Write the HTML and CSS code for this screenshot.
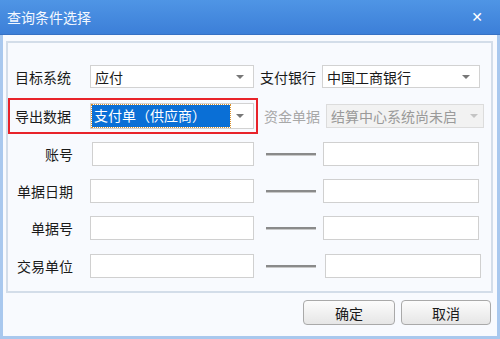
FILE: index.html
```html
<!DOCTYPE html>
<html lang="zh-CN">
<head>
  <meta charset="UTF-8" />
  <title>查询条件选择</title>
  <link rel="stylesheet" href="styles.css">
</head>
<body>
  <div class="window">
    <div class="titlebar">
      <span class="title">查询条件选择</span>
      <span class="close">✕</span>
    </div>
    <div class="body">
      <div class="group">
        <div class="row row-first">
          <label class="lbl">目标系统</label>
          <div class="select">
            <span class="value">应付</span>
            <span class="arrow"></span>
          </div>
          <label class="lbl2">支付银行</label>
          <div class="select select-right">
            <span class="value">中国工商银行</span>
            <span class="arrow"></span>
          </div>
        </div>

        <div class="row row-export">
          <div class="marked">
            <label class="lbl">导出数据</label>
            <div class="select select-tall">
              <span class="value focused">支付单（供应商）</span>
              <span class="arrow"></span>
            </div>
          </div>
          <label class="lbl2 disabled-text">资金单据</label>
          <div class="select select-right select-disabled">
            <span class="value">结算中心系统尚未启</span>
            <span class="arrow"></span>
          </div>
        </div>

        <div class="row row-range r3">
          <label class="lbl right">账号</label>
          <input class="field field-a" type="text" />
          <span class="dash"></span>
          <input class="field field-b" type="text" />
        </div>
        <div class="row row-range r4">
          <label class="lbl right">单据日期</label>
          <input class="field" type="text" />
          <span class="dash"></span>
          <input class="field field-b" type="text" />
        </div>
        <div class="row row-range r5">
          <label class="lbl right">单据号</label>
          <input class="field" type="text" />
          <span class="dash"></span>
          <input class="field field-b" type="text" />
        </div>
        <div class="row row-range r6">
          <label class="lbl right">交易单位</label>
          <input class="field" type="text" />
          <span class="dash"></span>
          <input class="field field-c" type="text" />
        </div>
      </div>

      <div class="buttons">
        <button class="btn btn-ok">确定</button>
        <button class="btn btn-cancel">取消</button>
      </div>
    </div>
  </div>
</body>
</html>
```

FILE: styles.css
```css
* {
  box-sizing: border-box;
}

body {
  margin: 0;
  font-family: "Noto Sans CJK SC", "Noto Sans", sans-serif;
  font-size: 14px;
  color: #1a1a1a;
  background: #fff;
}

.window {
  width: 500px;
  height: 339px;
  display: flex;
  flex-direction: column;
}

.titlebar {
  height: 35px;
  display: flex;
  align-items: center;
  justify-content: space-between;
  padding: 0 17px 0 7px;
  background: linear-gradient(to bottom, #4f95e5, #3c7fd8);
  border-bottom: 1px solid #3671c4;
  color: #fff;
}

.title {
  font-size: 14px;
  line-height: 1;
  margin-top: -1px;
  color: #f4f8ff;
}

.close {
  font-family: "DejaVu Sans", sans-serif;
  font-size: 14px;
  font-weight: bold;
}

.body {
  flex: 1;
  background: #f8fafe;
  border: 3px solid #a9c8ee;
  border-top: none;
  padding: 6px 4px 0 3px;
}

.group {
  height: 252px;
  border: 2px solid #d3dde9;
  background: #f8fafe;
}

.row {
  display: flex;
  align-items: center;
}

.row-first {
  height: 23px;
  margin-top: 22px;
}

.lbl {
  width: 82px;
  padding-left: 7px;
  flex-shrink: 0;
  white-space: nowrap;
}

.lbl.right {
  width: 65px;
  text-align: right;
  margin-right: 17px;
  padding-left: 0;
}

.lbl2 {
  width: 62px;
  margin-left: 6px;
  white-space: nowrap;
  flex-shrink: 0;
}

.disabled-text {
  color: #a8a8a8;
}

.select {
  position: relative;
  width: 164px;
  height: 23px;
  border: 1px solid #d2d2d2;
  background: #fff;
  display: flex;
  align-items: center;
  padding-left: 4px;
}

.select-right {
  width: 158px;
}

.select-tall {
  height: 26px;
  padding-left: 1px;
}

.select-disabled {
  height: 24px;
  background: #f2f2f2;
  border-color: #dcdcdc;
  color: #9a9a9a;
  padding-left: 4px;
}

.value {
  white-space: nowrap;
  overflow: hidden;
}

.focused {
  width: 138px;
  height: 22px;
  line-height: 21px;
  padding-left: 2px;
  background: #0a6fd6;
  color: #fff;
  outline: 1px dotted #d9902a;
}

.arrow {
  position: absolute;
  right: 9px;
  top: 50%;
  margin-top: -2px;
  border-left: 4px solid transparent;
  border-right: 4px solid transparent;
  border-top: 4px solid #777;
}

.select-disabled .arrow {
  border-top-color: #c4c4c4;
  right: 5px;
}

.row-export {
  margin-top: 10px;
  height: 36px;
}

.marked {
  width: 250px;
  height: 36px;
  border: 2px solid #e8232a;
  display: flex;
  align-items: center;
  padding-left: 5px;
}

.marked .lbl {
  width: 75px;
  padding-left: 0;
}

.row-range {
  height: 24px;
}

.r3 { margin-top: 8px; }
.r4 { margin-top: 13px; }
.r5 { margin-top: 13px; }
.r6 { margin-top: 14px; }

.field {
  width: 164px;
  height: 24px;
  border: 1px solid #d0d0d0;
  background: #fff;
  font: inherit;
  padding: 0 4px;
}

.field-a {
  margin-left: 2px;
  width: 162px;
}

.field-b {
  width: 156px;
  margin-left: 7px;
}

.field-c {
  width: 156px;
  margin-left: 9px;
}

.dash {
  width: 50px;
  height: 3px;
  margin-left: 12px;
  border-top: 2px solid #8a8a8a;
  border-bottom: 1px solid #c8c8c8;
}

.buttons {
  display: flex;
  justify-content: flex-end;
  gap: 6px;
  margin-top: 7px;
  padding-right: 2px;
}

.btn {
  height: 25px;
  border: 1px solid #a9a9a9;
  border-radius: 4px;
  background: linear-gradient(to bottom, #fcfcfc, #e6e6e6);
  font: inherit;
  color: #1a1a1a;
  padding: 0;
}

.btn-ok {
  width: 92px;
}

.btn-cancel {
  width: 90px;
}
```
